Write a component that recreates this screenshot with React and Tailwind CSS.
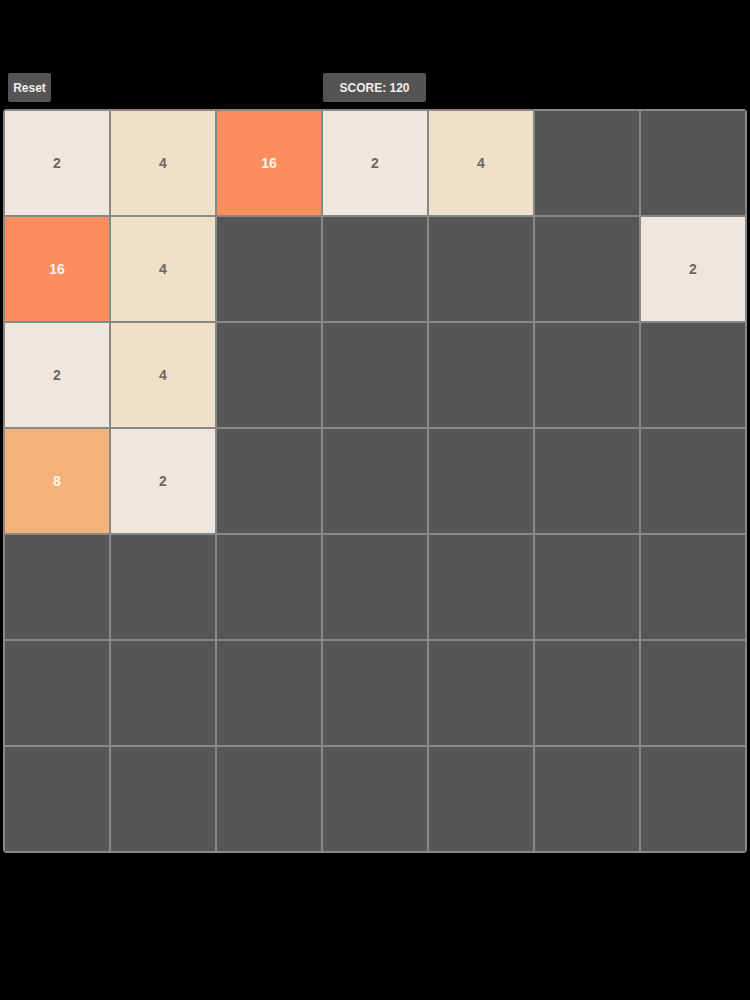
import React from 'react';

const board = [
  [2, 4, 16, 2, 4, 0, 0],
  [16, 4, 0, 0, 0, 0, 2],
  [2, 4, 0, 0, 0, 0, 0],
  [8, 2, 0, 0, 0, 0, 0],
  [0, 0, 0, 0, 0, 0, 0],
  [0, 0, 0, 0, 0, 0, 0],
  [0, 0, 0, 0, 0, 0, 0],
];

const tileStyles = {
  0: 'bg-[#575657]',
  2: 'bg-[#efe6de] text-[#6f665f]',
  4: 'bg-[#efe0c8] text-[#6f665f]',
  8: 'bg-[#f3b27a] text-[#f9f6f2]',
  16: 'bg-[#fc8d5c] text-[#f9f6f2]',
};

export default function App() {
  return (
    <div className="min-h-[1000px] w-[750px] bg-black font-['Liberation_Sans',Arial,sans-serif]">
      <div className="pt-[73px] px-2 relative h-[101px]">
        <button className="h-[29px] w-[43px] bg-[#555455] text-[#eeeeee] text-[12px] font-bold rounded-[2px]">
          Reset
        </button>
        <div className="absolute left-[323px] top-[73px] h-[29px] w-[103px] bg-[#555455] text-[#eeeeee] text-[12px] font-bold rounded-[2px] flex items-center justify-center">
          SCORE: 120
        </div>
      </div>
      <div className="ml-[3px] mt-[8px] w-[744px] h-[744px] border border-[#8a8886] rounded-[3px] grid grid-cols-7 overflow-hidden">
        {board.flat().map((v, i) => (
          <div
            key={i}
            className={`w-[106px] h-[106px] border border-[#8a8886] flex items-center justify-center text-[14px] font-bold ${tileStyles[v]}`}
          >
            {v ? v : ''}
          </div>
        ))}
      </div>
    </div>
  );
}
